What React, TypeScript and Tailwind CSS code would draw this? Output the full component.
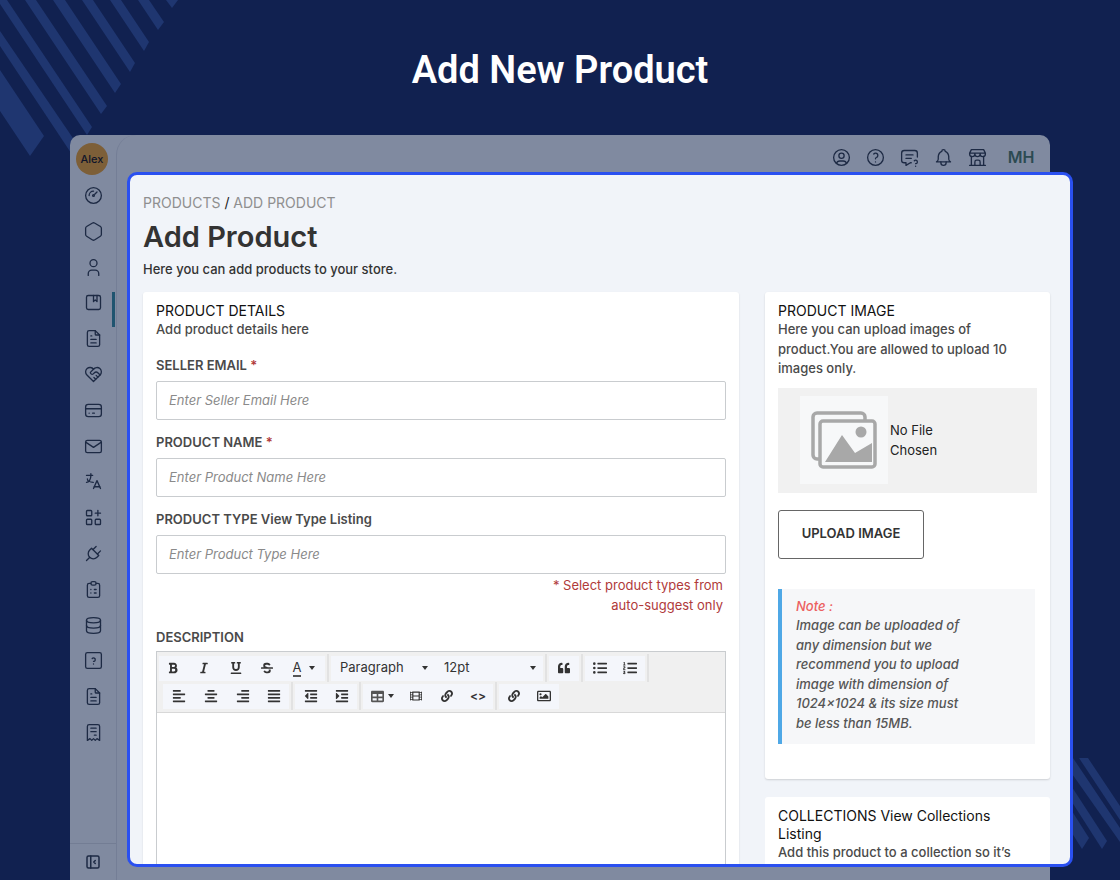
import {
  TbAlbum,
  TbApps,
  TbBell,
  TbBuildingStore,
  TbClipboardList,
  TbCreditCard,
  TbDatabase,
  TbFileText,
  TbGauge,
  TbHeartHandshake,
  TbHelp,
  TbHelpSquare,
  TbHexagon,
  TbLanguage,
  TbLayoutSidebarLeftCollapse,
  TbMail,
  TbMessageQuestion,
  TbPlug,
  TbReceipt,
  TbUser,
  TbUserCircle,
} from "react-icons/tb";
import {
  FaAlignCenter,
  FaAlignJustify,
  FaAlignLeft,
  FaAlignRight,
  FaBold,
  FaItalic,
  FaLink,
  FaListOl,
  FaListUl,
  FaOutdent,
  FaIndent,
  FaQuoteRight,
  FaStrikethrough,
  FaUnderline,
  FaRegImage,
  FaTable,
  FaFilm,
} from "react-icons/fa";

const sideIcons = [
  TbGauge,
  TbHexagon,
  TbUser,
  TbAlbum,
  TbFileText,
  TbHeartHandshake,
  TbCreditCard,
  TbMail,
  TbLanguage,
  TbApps,
  TbPlug,
  TbClipboardList,
  TbDatabase,
  TbHelpSquare,
  TbFileText,
  TbReceipt,
];

const topIcons = [TbUserCircle, TbHelp, TbMessageQuestion, TbBell, TbBuildingStore];

const stripesTop = [
  "166,0 172,8 178,0",
  "138,0 158,30 164,22 149,0",
  "110,0 144,51 149,42 121,0",
  "82,0 130,72 135,63 93,0",
  "53,0 115,93 121,84 65,0",
  "25,0 101,114 107,106 36,0",
  "0,4 87,135 92,127 7,0 0,0",
  "0,31 0,46 73,156 79,147",
  "0,70 0,111 30,156 44,136",
];

const stripesBottom = [
  "9,0 18,0 50,48 50,62",
  "0,0 3,0 50,70 50,84 0,13",
  "0,26 37,83 32,91 0,41",
  "0,50 19,80 12,91 0,72",
];

function Label({ text, required }: { text: string; required?: boolean }) {
  return (
    <div className="text-[13px] leading-5 font-semibold text-[#4a4a4a]">
      {text} {required && <span className="text-[#b03a3a]">*</span>}
    </div>
  );
}

function Field({ placeholder }: { placeholder: string }) {
  return (
    <div className="mt-[6px] flex h-[39px] items-center rounded-[2px] border border-[#c9cccf] bg-white px-3 text-[13px] text-[#8a8a8a] italic">
      {placeholder}
    </div>
  );
}

function Tool({ children, w = "w-[28px]" }: { children: React.ReactNode; w?: string }) {
  return (
    <div className={`flex h-[25px] items-center justify-center bg-[#f4f6fb] text-[#333] ${w}`}>
      {children}
    </div>
  );
}

function Sep() {
  return <div className="mx-[2px] h-[28px] w-[2px] bg-[#e2e2e2]" />;
}

function Caret() {
  return <span className="h-0 w-0 border-x-[3.5px] border-t-[4px] border-x-transparent border-t-[#333]" />;
}

export default function App() {
  return (
    <div className="relative h-[880px] w-[1120px] overflow-hidden bg-[#112150] font-['Inter',sans-serif]">
      <svg className="absolute top-0 left-0" width="190" height="165">
        {stripesTop.map((p) => (
          <polygon key={p} points={p} fill="#1f3670" />
        ))}
      </svg>
      <svg className="absolute top-[758px] left-[1070px]" width="50" height="95">
        {stripesBottom.map((p) => (
          <polygon key={p} points={p} fill="#1f3670" />
        ))}
      </svg>

      <h1 className="relative pt-[42px] text-center font-['Roboto',sans-serif] text-[38px] leading-[56px] font-semibold text-white">
        Add New Product
      </h1>

      {/* dimmed app behind the panel */}
      <div className="relative mt-[37px] ml-[70px] flex h-[745px] w-[980px] rounded-t-[10px] bg-[#808aa0] text-[#1d2a44]">
        <div className="relative flex w-[46px] flex-col items-center">
          <div className="mt-2 mr-[2px] flex h-8 w-8 items-center justify-center rounded-full bg-[#7d5f38] text-[11px] font-medium text-[#10152a]">
            Alex
          </div>
          <div className="mt-[10px] flex flex-col items-center gap-[14.8px]">
            {sideIcons.map((Icon, i) => (
              <Icon key={i} className="h-[21px] w-[21px]" strokeWidth={1.5} />
            ))}
          </div>
          <div className="absolute top-[157px] right-[1px] h-[35px] w-[3px] bg-[#1f5470]" />
          <div className="mt-auto flex h-[37px] w-full items-center justify-center border-t border-[#737d94]">
            <TbLayoutSidebarLeftCollapse className="h-[18px] w-[18px]" />
          </div>
        </div>
        <div className="flex flex-1 justify-end gap-[13px] rounded-tl-[20px] border-l border-[#747e96] pt-[11px] pr-[12px]">
          {topIcons.map((Icon, i) => (
            <Icon key={i} className="mt-[1px] h-[21px] w-[21px]" strokeWidth={1.5} />
          ))}
          <div className="ml-[3px] h-[24px] w-[34px] text-center text-[16px] leading-[22px] font-semibold text-[#2c4a52]">
            MH
          </div>
        </div>
      </div>

      {/* panel on top */}
      <div className="absolute top-[172px] left-[127px] h-[695px] w-[946px] overflow-hidden rounded-[10px] border-[3px] border-[#2a50f0] bg-[#f1f4f9] px-[13px] pt-[18px]">
        <div className="text-[14px] leading-5 text-[#8f8f8f]">
          PRODUCTS <span className="text-[#222]">/</span> ADD PRODUCT
        </div>
        <div className="mt-[6px] text-[29px] leading-9 font-semibold text-[#333]">Add Product</div>
        <div className="mt-[4px] text-[13px] leading-5 font-medium text-[#333]">
          Here you can add products to your store.
        </div>

        <div className="mt-[13px] flex items-start gap-[26px]">
          <div className="h-[600px] w-[596px] shrink-0 rounded-[3px] bg-white px-[13px] pt-[10px] shadow-[0_1px_2px_rgba(0,0,0,0.12)]">
            <div className="text-[14px] leading-[18px] text-[#111]">PRODUCT DETAILS</div>
            <div className="text-[13px] leading-[18px] font-medium text-[#4a4a4a]">
              Add product details here
            </div>
            <div className="mt-[17px]">
              <Label text="SELLER EMAIL" required />
              <Field placeholder="Enter Seller Email Here" />
            </div>
            <div className="mt-[12px]">
              <Label text="PRODUCT NAME" required />
              <Field placeholder="Enter Product Name Here" />
            </div>
            <div className="mt-[12px]">
              <Label text="PRODUCT TYPE  View Type Listing" />
              <Field placeholder="Enter Product Type Here" />
            </div>
            <div className="mt-[1px] pr-[3px] text-right text-[13px] leading-5 text-[#b03a3a]">
              * Select product types from
              <br />
              auto-suggest only
            </div>
            <div className="mt-[12px]">
              <Label text="DESCRIPTION" />
            </div>
            <div className="mt-[4px] h-[300px] border border-[#c9cccf]">
              <div className="h-[61px] border-b border-[#d8d8d8] bg-[#f0f0f0] pt-[2px] pl-[2px]">
                <div className="flex h-[28px] items-center">
                  <Tool><FaBold className="h-3 w-3" /></Tool>
                  <Tool w="w-[34px]"><FaItalic className="h-3 w-3" /></Tool>
                  <Tool w="w-[30px]"><FaUnderline className="h-3 w-3" /></Tool>
                  <Tool w="w-[32px]"><FaStrikethrough className="h-3 w-3" /></Tool>
                  <Tool w="w-[42px]">
                    <span className="mr-2 border-b-2 border-[#555] text-[13px] leading-[15px]">A</span>
                    <Caret />
                  </Tool>
                  <Sep />
                  <Tool w="w-[106px]">
                    <span className="flex w-full items-center justify-between px-[9px] text-[13px]">
                      Paragraph <Caret />
                    </span>
                  </Tool>
                  <Tool w="w-[106px]">
                    <span className="flex w-full items-center justify-between px-[7px] text-[13px]">
                      12pt <Caret />
                    </span>
                  </Tool>
                  <Sep />
                  <Tool w="w-[30px]"><FaQuoteRight className="h-3 w-3 rotate-180" /></Tool>
                  <Sep />
                  <Tool w="w-[30px]"><FaListUl className="h-[14px] w-[14px]" /></Tool>
                  <Tool w="w-[30px]"><FaListOl className="h-[14px] w-[14px]" /></Tool>
                  <Sep />
                </div>
                <div className="flex h-[28px] items-center pl-[4px]">
                  <Tool w="w-[32px]"><FaAlignLeft className="h-[14px] w-[14px]" /></Tool>
                  <Tool w="w-[32px]"><FaAlignCenter className="h-[14px] w-[14px]" /></Tool>
                  <Tool w="w-[31px]"><FaAlignRight className="h-[14px] w-[14px]" /></Tool>
                  <Tool w="w-[31px]"><FaAlignJustify className="h-[14px] w-[14px]" /></Tool>
                  <Sep />
                  <Tool w="w-[31px]"><FaOutdent className="h-[14px] w-[14px]" /></Tool>
                  <Tool w="w-[31px]"><FaIndent className="h-[14px] w-[14px]" /></Tool>
                  <Sep />
                  <Tool w="w-[38px]">
                    <FaTable className="mr-1 h-[13px] w-[13px] text-[#555]" />
                    <Caret />
                  </Tool>
                  <Tool w="w-[30px]"><FaFilm className="h-3 w-3" /></Tool>
                  <Tool w="w-[32px]"><FaLink className="h-3 w-3" /></Tool>
                  <Tool w="w-[30px]"><span className="text-[12px] font-semibold">&lt;&gt;</span></Tool>
                  <Sep />
                  <Tool w="w-[30px]"><FaLink className="h-3 w-3" /></Tool>
                  <Tool w="w-[30px]"><FaRegImage className="h-[14px] w-[14px]" /></Tool>
                </div>
              </div>
            </div>
          </div>

          <div className="w-[285px] shrink-0">
            <div className="h-[487px] rounded-[3px] bg-white px-[13px] pt-[10px] shadow-[0_1px_2px_rgba(0,0,0,0.15)]">
              <div className="text-[14px] leading-[18px] text-[#111]">PRODUCT IMAGE</div>
              <div className="text-[13px] leading-[19.5px] font-medium text-[#4a4a4a]">
                Here you can upload images of product.You are allowed to upload 10 images only.
              </div>
              <div className="mt-[9px] flex h-[105px] w-[259px] items-center bg-[#f1f1f1] pl-[22px]">
                <div className="flex h-[88px] w-[88px] shrink-0 items-center justify-center bg-[#f7f8f9]">
                  <svg width="66" height="58" viewBox="0 0 66 58" fill="none">
                    <rect x="2" y="2" width="52" height="46" rx="4" stroke="#a8a8a8" strokeWidth="3.5" />
                    <rect x="9" y="10" width="55" height="46" rx="3" fill="#f7f8f9" stroke="#a8a8a8" strokeWidth="3.5" />
                    <circle cx="50" cy="21" r="5.5" fill="#a8a8a8" />
                    <path d="M14 51 L31 24 L44 42 L61 32 L61 51 Z" fill="#a8a8a8" />
                  </svg>
                </div>
                <div className="ml-[2px] w-[70px] text-[13px] leading-5 text-[#222]">No File Chosen</div>
              </div>
              <div className="mt-[17px] flex h-[49px] w-[146px] items-center justify-center rounded-[3px] border border-[#666] text-[13px] font-semibold text-[#333]">
                UPLOAD IMAGE
              </div>
              <div className="mt-[30px] h-[155px] w-[257px] border-l-[4px] border-[#4fa8e6] bg-[#f6f7f9] pt-2 pl-[14px] text-[13px] leading-[19.6px] font-medium text-[#555] italic">
                <span className="text-[#ec5f5f]">Note :</span>
                <br />
                Image can be uploaded of
                <br />
                any dimension but we
                <br />
                recommend you to upload
                <br />
                image with dimension of
                <br />
                1024×1024 &amp; its size must
                <br />
                be less than 15MB.
              </div>
            </div>
            <div className="mt-[18px] h-[200px] rounded-[3px] bg-white px-[13px] pt-[10px]">
              <div className="text-[14px] leading-[18px] text-[#111]">COLLECTIONS View Collections Listing</div>
              <div className="text-[13px] leading-[19.5px] font-medium text-[#4a4a4a]">
                Add this product to a collection so it’s easy to find in your store.
              </div>
            </div>
          </div>
        </div>
      </div>
    </div>
  );
}
